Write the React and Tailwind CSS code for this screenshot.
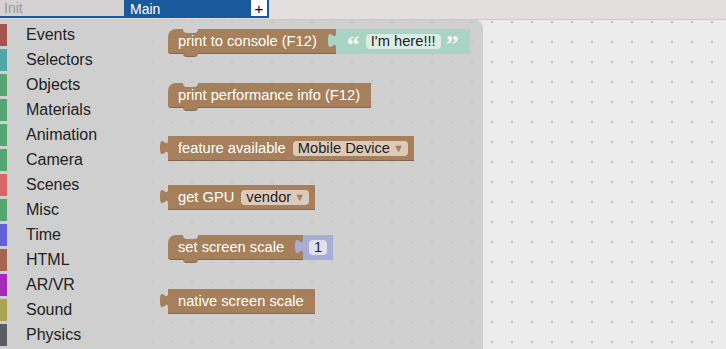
import React from "react";

const categories = [
  { name: "Events", color: "bg-[#a5554f]" },
  { name: "Selectors", color: "bg-[#4fa6a6]" },
  { name: "Objects", color: "bg-[#55a672]" },
  { name: "Materials", color: "bg-[#55a672]" },
  { name: "Animation", color: "bg-[#55a672]" },
  { name: "Camera", color: "bg-[#55a672]" },
  { name: "Scenes", color: "bg-[#d96565]" },
  { name: "Misc", color: "bg-[#55a672]" },
  { name: "Time", color: "bg-[#6262d6]" },
  { name: "HTML", color: "bg-[#a5654f]" },
  { name: "AR/VR", color: "bg-[#a52ab8]" },
  { name: "Sound", color: "bg-[#a8a653]" },
  { name: "Physics", color: "bg-[#5c5c66]" },
];

// jigsaw tab that sticks out of the left side of a value block
const OutputTab = ({ fill }) => (
  <svg
    className="absolute right-full top-[4px]"
    width="8"
    height="15"
    viewBox="0 0 8 15"
  >
    <path d="M8 0 c0 10 -8 -8 -8 7.5 s8 -2.5 8 7.5 Z" fill={fill} />
  </svg>
);

const Statement = ({ children, className = "" }) => (
  <div
    className={`relative flex h-[25px] items-center rounded-tl-[8px] rounded-bl-[3px] border-b border-[#86664a] bg-[#a6805b] pl-[10px] text-white ${className}`}
  >
    {/* top notch */}
    <div className="absolute left-[15px] top-0 h-[4px] w-[15px] rounded-b-[5px] bg-[#d0d0d0]" />
    {/* bottom tab */}
    <div className="absolute left-[15px] top-full h-[4px] w-[15px] rounded-b-[5px] border-b border-[#86664a] bg-[#a6805b]" />
    {children}
  </div>
);

const Reporter = ({ children, className = "" }) => (
  <div
    className={`relative flex h-[25px] items-center border-b border-[#86664a] bg-[#a6805b] pl-[10px] text-white ${className}`}
  >
    <OutputTab fill="#a6805b" />
    {children}
  </div>
);

const Dropdown = ({ label }) => (
  <div className="ml-[7px] flex h-[15px] items-center rounded-[4px] bg-[#dccbbb] pl-[5px] pr-[4px] text-[#1e1e1e]">
    {label}
    <span className="ml-[3px] text-[11px] text-[#a6805b]">▼</span>
  </div>
);

export default function App() {
  return (
    <div className="h-[349px] w-[726px] overflow-hidden bg-[#ececec] font-['Liberation_Sans',Arial,sans-serif]">
      {/* tab bar */}
      <div className="flex h-[20px] border-b border-[#cdc8c8] bg-[#e4dfdf] text-[14px]">
        <div className="flex h-[18px] w-[124px] items-center border-b-2 border-[#1a5a9c] bg-[#d6d2d2] pl-[4px] text-[#9a9a9a]">
          Init
        </div>
        <div className="flex h-[18px] w-[127px] items-center bg-[#1a5a9c] pl-[6px] text-white">
          Main
        </div>
        <div className="flex h-[18px] w-[18px] items-center justify-center border-b-2 border-r-2 border-[#1a5a9c] bg-white text-[15px] leading-none text-black">
          +
        </div>
      </div>

      <div className="flex h-[329px]">
        {/* toolbox */}
        <div className="w-[152px] shrink-0 bg-[#cfcfcf] pt-[2px] text-[16px] text-[#222]">
          {categories.map((c) => (
            <div key={c.name} className="flex h-[25px] items-center">
              <div className={`h-[22px] w-[7px] ${c.color}`} />
              <span className="ml-[19px]">{c.name}</span>
            </div>
          ))}
          <div className="flex h-[25px] items-center">
            <div className="h-[22px] w-[7px] bg-[#8a2aa5]" />
          </div>
        </div>

        {/* workspace */}
        <div className="flex-1 bg-[radial-gradient(circle,#bdbdbd_1px,transparent_1.6px)] bg-[length:20px_20px] bg-[position:10px_12px]">
          {/* flyout */}
          <div className="flex h-full w-[331px] flex-col items-start rounded-tr-[8px] bg-[#c9c9c9]/80 pl-[16px] text-[14.7px]">
            {/* print to console */}
            <div className="mt-[9px] flex">
              <Statement className="pr-[19px]">print to console (F12)</Statement>
              <div className="relative flex h-[25px] items-center bg-[#a9d3c4] pl-[11px] pr-[11px]">
                <OutputTab fill="#a9d3c4" />
                <span className="mt-[6px] font-['Liberation_Serif',serif] text-[26px] font-bold leading-none text-[#f7f7f7]">
                  “
                </span>
                <div className="ml-[6px] flex h-[15px] items-center rounded-[4px] bg-[#dcede6] px-[5px] text-[#1e1e1e]">
                  I'm here!!!
                </div>
                <span className="ml-[5px] mt-[6px] font-['Liberation_Serif',serif] text-[26px] font-bold leading-none text-[#f7f7f7]">
                  ”
                </span>
              </div>
            </div>

            {/* print performance info */}
            <Statement className="mt-[29px] pr-[11px]">
              print performance info (F12)
            </Statement>

            {/* feature available */}
            <Reporter className="mt-[28px] pr-[6px]">
              feature available
              <Dropdown label="Mobile Device" />
            </Reporter>

            {/* get GPU */}
            <Reporter className="mt-[24px] pr-[6px]">
              get GPU
              <Dropdown label="vendor" />
            </Reporter>

            {/* set screen scale */}
            <div className="mt-[25px] flex">
              <Statement className="pr-[19px]">set screen scale</Statement>
              <div className="relative flex h-[25px] items-center bg-[#a8add6] pl-[6px] pr-[6px]">
                <OutputTab fill="#a8add6" />
                <div className="flex h-[15px] w-[18px] items-center justify-center rounded-[4px] bg-[#e0e1ef] text-[#1e1e1e]">
                  1
                </div>
              </div>
            </div>

            {/* native screen scale */}
            <Reporter className="mt-[29px] pr-[11px]">native screen scale</Reporter>
          </div>
        </div>
      </div>
    </div>
  );
}
